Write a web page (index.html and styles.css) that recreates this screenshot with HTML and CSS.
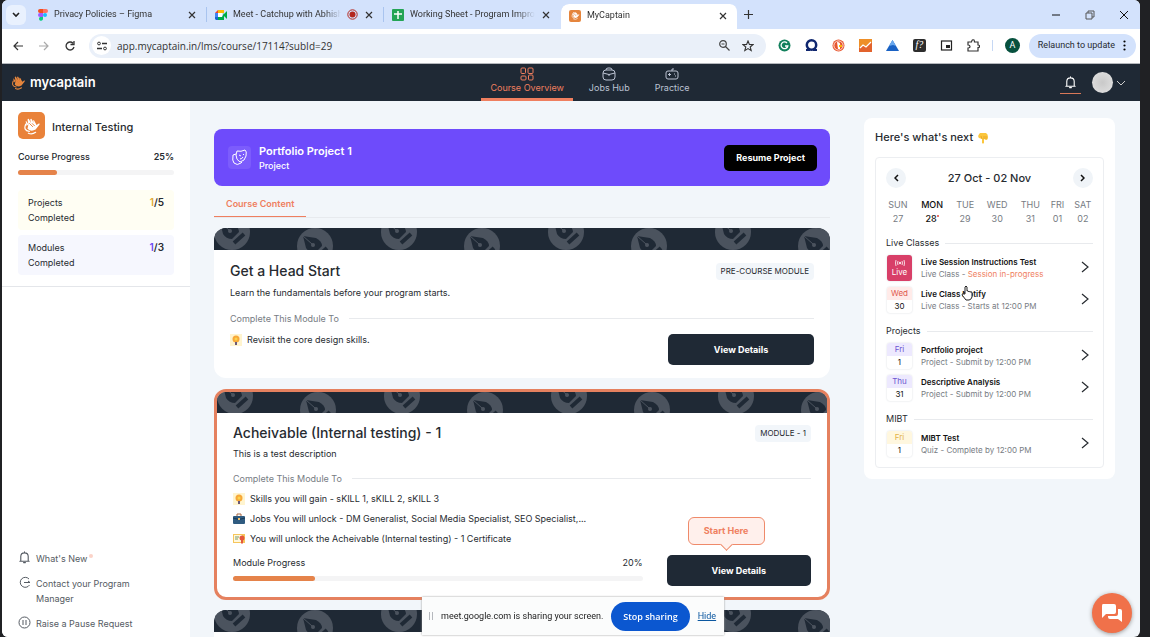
FILE: index.html
```html
<!DOCTYPE html>
<html lang="en">
<head>
    <meta charset="UTF-8">
    <meta name="viewport" content="width=device-width, initial-scale=1.0">
    <title>MyCaptain</title>
    <link rel="stylesheet" href="styles.css">
</head>
<body>
    <svg class="defs" width="0" height="0" aria-hidden="true">
        <defs>
            <g id="pen">
                <circle r="18" fill="#4b535e"/>
                <path d="M-12-10 L1-8 Q7-5 7 0 L0 7 Q-6 7 -9 2 Z" fill="#1f2935"/>
                <path d="M-12-10 L-3-2" stroke="#4b535e" stroke-width="1"/>
                <circle cx="-2" cy="-1" r="2" fill="#4b535e"/>
                <path d="M2 11 L12 2" stroke="#1f2935" stroke-width="4"/>
            </g>
            <pattern id="pens" width="167" height="40" patternUnits="userSpaceOnUse">
                <use href="#pen" x="18" y="4"/>
                <use href="#pen" x="101" y="18"/>
            </pattern>
            <symbol id="hand" viewBox="0 0 20 20">
                <path d="M4 10 L3 5 Q3 4 4 5 L6 8 M6 8 L5 3 Q6 1 7 3 L9 7 L8 3 Q9 1 10 3 L12 7 L11 4 Q12 3 13 5 L15 9 L18 7 Q19 8 18 9 L14 14 Q9 17 5 13 Z" fill="currentColor"/>
                <path d="M3 8 Q0 15 7 16 M6 18 Q10 20 14 17" fill="none" stroke="currentColor" stroke-width="1.4" stroke-linecap="round"/>
                <path d="M7 7 L11 11 M10 7 L13 10" stroke="#e87a2c" stroke-width="1"/>
            </symbol>
            <symbol id="bell" viewBox="0 0 14 14">
                <path d="M2 11 H12 M3 11 V6 Q3 2 7 2 Q11 2 11 6 V11 M7 1 V2 M6 12.500 H8" fill="none" stroke="currentColor" stroke-width="1.2" stroke-linecap="round"/>
            </symbol>
            <symbol id="close" viewBox="0 0 10 10">
                <path d="M2 2 L8 8 M8 2 L2 8" stroke="currentColor" stroke-width="1.2"/>
            </symbol>
            <symbol id="chevron" viewBox="0 0 8 12">
                <path d="M1 1 L7 6 L1 11" fill="none" stroke="currentColor" stroke-width="1.2"/>
            </symbol>
            <symbol id="bulb" viewBox="0 0 12 12">
                <rect width="12" height="12" fill="#fff4cf"/>
                <circle cx="6" cy="5" r="3.500" fill="#f7a838"/>
                <circle cx="6" cy="5" r="1.500" fill="#fbd34d"/>
                <rect x="5" y="8" width="2" height="3" fill="#6a5878"/>
            </symbol>
        </defs>
    </svg>

    <div class="window">
        <div class="tabs">
            <button class="tab-search" aria-label="Search tabs">
                <svg width="8" height="6" viewBox="0 0 8 6"><path d="M1 1 L4 4 L7 1" fill="none" stroke="#222" stroke-width="1.6"/></svg>
            </button>
            <div class="tab">
                <svg width="10" height="12" viewBox="0 0 10 12"><path d="M2 0H5V4H2A2 2 0 0 1 2 0" fill="#f24e1e"/><path d="M5 0H8A2 2 0 0 1 8 4H5" fill="#ff7262"/><path d="M2 4H5V8H2A2 2 0 0 1 2 4" fill="#a259ff"/><circle cx="7" cy="6" r="2" fill="#1abcfe"/><path d="M2 8H5V10A2 2 0 1 1 2 8" fill="#0acf83"/></svg>
                <span class="tab-name">Privacy Policies – Figma</span>
                <button aria-label="Close tab"><svg width="10" height="10"><use href="#close"/></svg></button>
            </div>
            <div class="tab">
                <svg width="12" height="10" viewBox="0 0 12 10"><path d="M0 3L3 0V3Z" fill="#ea4335"/><path d="M3 0H9V3H3Z" fill="#fbbc04"/><path d="M0 3H3V7H0Z" fill="#4285f4"/><path d="M0 7H3V10H1L0 9Z" fill="#1967d2"/><path d="M3 7H7L9 3V10H3Z M8 5L12 1V9Z" fill="#00ac47"/><path d="M3 3H7V7H3Z" fill="#fff"/></svg>
                <span class="tab-name">Meet - Catchup with Abhish</span>
                <svg width="11" height="11" viewBox="0 0 11 11"><circle cx="5.500" cy="5.500" r="4.700" fill="none" stroke="#b3261e"/><circle cx="5.500" cy="5.500" r="3" fill="#b3261e"/></svg>
                <button aria-label="Close tab"><svg width="10" height="10"><use href="#close"/></svg></button>
            </div>
            <div class="tab">
                <svg width="12" height="12" viewBox="0 0 12 12"><rect width="12" height="12" rx="1" fill="#23a455"/><path d="M6 2V10M2 5H10" stroke="#fff" stroke-width="1.5"/></svg>
                <span class="tab-name">Working Sheet - Program Impro</span>
                <button aria-label="Close tab"><svg width="10" height="10"><use href="#close"/></svg></button>
            </div>
            <div class="tab active">
                <span class="favicon"><svg width="9" height="9"><use href="#hand"/></svg></span>
                <span class="tab-name">MyCaptain</span>
                <button aria-label="Close tab"><svg width="10" height="10"><use href="#close"/></svg></button>
            </div>
            <button class="new-tab" aria-label="New tab"><svg width="9" height="9" viewBox="0 0 9 9"><path d="M4.500 0V9M0 4.500H9" stroke="#333" stroke-width="1.2"/></svg></button>
            <div class="window-buttons">
                <button aria-label="Minimize"><svg width="10" height="10" viewBox="0 0 10 10"><path d="M1 5H9" stroke="#111"/></svg></button>
                <button aria-label="Restore"><svg width="10" height="10" viewBox="0 0 10 10"><path d="M1 3H7V9H1Z M3 3V1H9V7H7" fill="none" stroke="#555"/></svg></button>
                <button aria-label="Close"><svg width="10" height="10" viewBox="0 0 10 10"><path d="M1 1L9 9M9 1L1 9" stroke="#111"/></svg></button>
            </div>
        </div>

        <div class="toolbar">
            <button aria-label="Back"><svg width="10" height="10" viewBox="0 0 10 10"><path d="M10 5H1M5 1L1 5L5 9" fill="none" stroke="#333" stroke-width="1.2"/></svg></button>
            <button aria-label="Forward"><svg width="10" height="10" viewBox="0 0 10 10"><path d="M0 5H9M5 1L9 5L5 9" fill="none" stroke="#aaa" stroke-width="1.2"/></svg></button>
            <button aria-label="Reload"><svg width="10" height="10" viewBox="0 0 10 10"><path d="M9 6A4 4 0 1 1 8 2.200M9 0V3.500H5.500" fill="none" stroke="#333" stroke-width="1.3"/></svg></button>
            <div class="address">
                <span class="site-info"><svg width="10" height="10" viewBox="0 0 10 10"><path d="M5 2.500H10M0 7.500H5" stroke="#333" stroke-width="1.3"/><circle cx="2" cy="2.500" r="1.400" fill="none" stroke="#333"/><circle cx="8" cy="7.500" r="1.400" fill="none" stroke="#333"/></svg></span>
                <input type="text" aria-label="Address" value="app.mycaptain.in/lms/course/17114?subId=29">
                <svg width="11" height="11" viewBox="0 0 11 11"><circle cx="4" cy="4" r="3.300" fill="none" stroke="#444" stroke-width="1.2"/><path d="M6.500 6.500L10.500 10.500M2.500 4H5.500" stroke="#444" stroke-width="1.2"/></svg>
                <svg width="12" height="12" viewBox="0 0 12 12"><path d="M6 1L7.400 4.400L11 4.600L8.200 7L9.200 10.600L6 8.600L2.800 10.600L3.800 7L1 4.600L4.600 4.400Z" fill="none" stroke="#333" stroke-width="1.1"/></svg>
            </div>
            <div class="extensions">
                <svg width="13" height="13" viewBox="0 0 13 13"><circle cx="6.500" cy="6.500" r="6" fill="#12805c"/><path d="M9 4A3.400 3.400 0 1 0 9.800 7H7" fill="none" stroke="#fff" stroke-width="1.300"/></svg>
                <svg width="13" height="13" viewBox="0 0 13 13"><circle cx="6.500" cy="6" r="4.700" fill="none" stroke="#10276f" stroke-width="2.500"/><path d="M1 11H5M12 11H8" stroke="#10276f" stroke-width="2"/></svg>
                <svg width="13" height="13" viewBox="0 0 13 13"><circle cx="6.500" cy="6.500" r="6" fill="#e8562f"/><circle cx="6.500" cy="6.500" r="4.600" fill="none" stroke="#fff" stroke-width=".8"/><path d="M5 3Q9 3 8 7V10H6Z" fill="#fff"/><path d="M7 6H10V8H7Z" fill="#fbbc04"/></svg>
                <svg width="13" height="13" viewBox="0 0 13 13"><rect width="13" height="13" fill="#ee8f28"/><path d="M0 9L4 6L7 8L13 3V13H0Z" fill="#e2632d"/><path d="M1 9L4 6L7 8L12 3" fill="none" stroke="#fff" stroke-width="1.200"/></svg>
                <svg width="13" height="13" viewBox="0 0 13 13"><path d="M6.500 1L13 12H0Z" fill="#1a62c4"/><path d="M6.500 1L10 7L7 6L3 7Z" fill="#69a8ee"/></svg>
                <span class="fx">f?</span>
                <svg width="13" height="13" viewBox="0 0 13 13"><rect x="1.500" y="2" width="10" height="9" fill="none" stroke="#222" stroke-width="1.200"/><rect x="6" y="6" width="4" height="3" fill="#222"/></svg>
                <svg width="13" height="13" viewBox="0 0 13 13"><path d="M1 3H4.500Q5 0 7 1Q7.500 2 7.500 3H11V6Q13 6 12.500 8Q12 8.500 11 8.500V12H1V9Q3 9 3 7.500Q3 6 1 6Z" fill="none" stroke="#333" stroke-width="1.200"/></svg>
            </div>
            <span class="divider"></span>
            <span class="profile">A</span>
            <button class="relaunch">Relaunch to update
                <svg width="3" height="11" viewBox="0 0 3 11"><circle cx="1.500" cy="1.500" r="1.100"/><circle cx="1.500" cy="5.500" r="1.100"/><circle cx="1.500" cy="9.500" r="1.100"/></svg>
            </button>
        </div>

        <header>
            <a class="brand" href="#"><svg width="15" height="15"><use href="#hand"/></svg><span>mycaptain</span></a>
            <nav>
                <a class="current" href="#">
                    <svg width="14" height="14" viewBox="0 0 14 14" fill="none" stroke="currentColor"><rect x="1" y="1" width="4.500" height="5.500" rx="1"/><rect x="8" y="1" width="5" height="5.500" rx="1"/><rect x="1" y="9" width="5" height="4" rx="1"/><rect x="8.500" y="8" width="4.500" height="5" rx="1"/></svg>
                    Course Overview
                </a>
                <a href="#">
                    <svg width="14" height="14" viewBox="0 0 14 14" fill="none" stroke="currentColor"><rect x="1" y="3" width="12" height="10" rx="3"/><path d="M4 3Q4 1 6 1H8Q10 1 10 3M1 6Q7 9 13 6M6 8H8"/></svg>
                    Jobs Hub
                </a>
                <a href="#">
                    <svg width="14" height="14" viewBox="0 0 14 14" fill="none" stroke="currentColor"><rect x="1" y="4" width="12" height="8" rx="2"/><path d="M7 4V2H9M3 7.500H6M4.500 6V9M9 7H10M10 9H11"/></svg>
                    Practice
                </a>
            </nav>
            <div class="account">
                <button class="notify" aria-label="Notifications"><svg width="13" height="13"><use href="#bell"/></svg></button>
                <button class="user" aria-label="Account"><span class="avatar"></span>
                    <svg width="10" height="6" viewBox="0 0 10 6"><path d="M1 1L5 5L9 1" fill="none" stroke="#ccc"/></svg>
                </button>
            </div>
        </header>

        <div class="page">
            <aside class="sidebar">
                <div class="course">
                    <div class="course-name"><span class="course-logo"><svg width="18" height="18"><use href="#hand"/></svg></span><h1>Internal Testing</h1></div>
                    <div class="label-row"><span>Course Progress</span><b>25%</b></div>
                    <div class="bar"><div style="width: 25%"></div></div>
                    <div class="count yellow"><span>Projects Completed</span><b><i>1</i>/5</b></div>
                    <div class="count violet"><span>Modules Completed</span><b><i>1</i>/3</b></div>
                </div>
                <div class="links">
                    <a href="#"><svg width="13" height="13"><use href="#bell"/></svg><span>What's New<sup></sup></span></a>
                    <a href="#"><svg width="13" height="13" viewBox="0 0 13 13"><path d="M11 3A5 5 0 1 0 11.500 9M6 6.500H12M10 5L12 6.500" fill="none" stroke="currentColor"/></svg><span>Contact your Program Manager</span></a>
                    <a href="#"><svg width="13" height="13" viewBox="0 0 13 13"><circle cx="6.500" cy="6.500" r="5.500" fill="none" stroke="currentColor"/><path d="M5 4V9M8 4V9" stroke="currentColor"/></svg><span>Raise a Pause Request</span></a>
                </div>
            </aside>

            <main>
                <section class="content">
                    <div class="resume">
                        <span class="resume-icon"><svg width="17" height="17" viewBox="0 0 17 17" fill="none" stroke="#fff"><path d="M6 2Q10 3 14 1Q16 2 15 7Q14 12 9 13Q5 11 5 6Z"/><path d="M5 5L2 6Q1 12 3 14Q6 17 10 14L11 13M8 6L10 7M12 6L13 5M9 10Q11 10 12 8"/></svg></span>
                        <div>
                            <h2>Portfolio Project 1</h2>
                            <p>Project</p>
                        </div>
                        <button>Resume Project</button>
                    </div>
                    <div class="content-tabs"><a href="#">Course Content</a></div>

                    <article class="card">
                        <svg class="band" width="100%" height="22"><rect width="100%" height="22" fill="url(#pens)"/></svg>
                        <div class="card-body">
                            <div class="card-title"><h3>Get a Head Start</h3><span class="badge">PRE-COURSE MODULE</span></div>
                            <p>Learn the fundamentals before your program starts.</p>
                            <div class="rule">Complete This Module To</div>
                            <div class="card-row">
                                <ul>
                                    <li><svg width="12" height="12"><use href="#bulb"/></svg>Revisit the core design skills.</li>
                                </ul>
                                <div class="action"><button class="details">View Details</button></div>
                            </div>
                        </div>
                    </article>

                    <article class="card started">
                        <svg class="band" width="100%" height="21"><rect width="100%" height="21" fill="url(#pens)"/></svg>
                        <div class="card-body">
                            <div class="card-title"><h3>Acheivable (Internal testing) - 1</h3><span class="badge">MODULE - 1</span></div>
                            <p>This is a test description</p>
                            <div class="rule">Complete This Module To</div>
                            <div class="card-row">
                                <div class="left">
                                    <ul>
                                        <li><svg width="12" height="12"><use href="#bulb"/></svg>Skills you will gain - sKILL 1, sKILL 2, sKILL 3</li>
                                        <li><svg width="12" height="12" viewBox="0 0 12 12"><path d="M4 3V1H8V3" fill="none" stroke="#a96640"/><rect y="3" width="12" height="8" rx="1" fill="#2f5b80"/><path d="M0 5Q6 8 12 5" fill="none" stroke="#183954"/><rect x="5" y="5" width="2" height="2" fill="#f2c36b"/></svg>Jobs You will unlock - DM Generalist, Social Media Specialist, SEO Specialist,...</li>
                                        <li><svg width="12" height="12" viewBox="0 0 12 12"><rect x="0" y="1" width="12" height="9" fill="#f6c65b"/><rect x="1" y="2" width="8" height="7" fill="#fff7dc"/><path d="M2 4H6M2 6H5" stroke="#7a9a6a"/><circle cx="9" cy="5" r="2.500" fill="#e4573d"/><path d="M8 7V11L9 10L10 11V7" fill="#e4573d"/></svg>You will unlock the Acheivable (Internal testing) - 1 Certificate</li>
                                    </ul>
                                    <div class="label-row"><span>Module Progress</span><span>20%</span></div>
                                    <div class="bar"><div style="width: 20%"></div></div>
                                </div>
                                <div class="action"><button class="details">View Details</button><span class="start">Start Here</span></div>
                            </div>
                        </div>
                    </article>

                    <article class="card">
                        <svg class="band" width="100%" height="22"><rect width="100%" height="22" fill="url(#pens)"/></svg>
                        <div class="card-body"></div>
                    </article>
                </section>

                <aside class="next">
                    <h2>Here's what's next
                        <svg width="12" height="12" viewBox="0 0 12 12"><path d="M3 1H9Q11 2 11 5Q11 8 9 8L7 7V11Q6 12 5 11V7L2 6Q0 4 3 1Z" fill="#fbc63d"/><path d="M7 4V7M9 4V7M4 4L5 7" stroke="#e39b22" stroke-width=".7"/></svg>
                    </h2>
                    <div class="calendar">
                        <div class="week">
                            <button aria-label="Previous week"><svg width="5" height="8" viewBox="0 0 5 8"><path d="M4 1L1 4L4 7" fill="none" stroke="#111" stroke-width="1.500"/></svg></button>
                            <span>27 Oct - 02 Nov</span>
                            <button aria-label="Next week"><svg width="5" height="8" viewBox="0 0 5 8"><path d="M1 1L4 4L1 7" fill="none" stroke="#111" stroke-width="1.500"/></svg></button>
                        </div>
                        <table>
                            <tr><th>SUN</th><th class="today">MON</th><th>TUE</th><th>WED</th><th>THU</th><th>FRI</th><th>SAT</th></tr>
                            <tr><td>27</td><td class="today">28<i></i></td><td>29</td><td>30</td><td>31</td><td>01</td><td>02</td></tr>
                        </table>
                        <div class="group">
                            <div class="rule">Live Classes</div>
                            <a class="event" href="#">
                                <span class="date live"><svg width="10" height="8" viewBox="0 0 10 8" fill="none" stroke="#fff" stroke-width=".8"><circle cx="5" cy="4" r=".8" fill="#fff"/><path d="M3 2Q2 4 3 6M7 2Q8 4 7 6M1 1Q0 4 1 7M9 1Q10 4 9 7"/></svg>Live</span>
                                <span class="event-text"><b>Live Session Instructions Test</b><small>Live Class - <em>Session in-progress</em></small></span>
                                <svg width="8" height="12"><use href="#chevron"/></svg>
                            </a>
                            <a class="event" href="#">
                                <span class="date red"><i>Wed</i>30</span>
                                <span class="event-text"><b>Live Class Notify</b><small>Live Class - Starts at 12:00 PM</small></span>
                                <svg width="8" height="12"><use href="#chevron"/></svg>
                            </a>
                        </div>
                        <div class="group">
                            <div class="rule">Projects</div>
                            <a class="event" href="#">
                                <span class="date purple"><i>Fri</i>1</span>
                                <span class="event-text"><b>Portfolio project</b><small>Project - Submit by 12:00 PM</small></span>
                                <svg width="8" height="12"><use href="#chevron"/></svg>
                            </a>
                            <a class="event" href="#">
                                <span class="date purple"><i>Thu</i>31</span>
                                <span class="event-text"><b>Descriptive Analysis</b><small>Project - Submit by 12:00 PM</small></span>
                                <svg width="8" height="12"><use href="#chevron"/></svg>
                            </a>
                        </div>
                        <div class="group">
                            <div class="rule">MIBT</div>
                            <a class="event" href="#">
                                <span class="date gold"><i>Fri</i>1</span>
                                <span class="event-text"><b>MIBT Test</b><small>Quiz - Complete by 12:00 PM</small></span>
                                <svg width="8" height="12"><use href="#chevron"/></svg>
                            </a>
                        </div>
                    </div>
                </aside>
            </main>
        </div>
    </div>

    <div class="sharing">
        <span class="grip"></span>
        <span>meet.google.com is sharing your screen.</span>
        <button>Stop sharing</button>
        <a href="#">Hide</a>
    </div>
    <button class="chat" aria-label="Chat">
        <svg width="22" height="20" viewBox="0 0 22 20"><path d="M2 1H13Q15 1 15 3V9Q15 11 13 11H5L1 15V3Q1 1 2 1Z" fill="#fff"/><path d="M17 6H19Q21 6 21 8V19L17 16H9Q7 16 7 14V13H15Q17 13 17 11Z" fill="#fff"/></svg>
    </button>
    <svg class="pointer" width="12" height="16" viewBox="0 0 12 16"><path d="M4 9V2Q5 0 6 2V6Q7 5 8 7Q9 6 9 7Q11 6 11 8V12Q10 15 8 15H5L1 10Q1 8 3 9Z" fill="#fff" stroke="#222"/></svg>
</body>
</html>
```
FILE: styles.css
```css
* {
    margin: 0;
    padding: 0;
    box-sizing: border-box;
}
body {
    height: 100vh;
    padding: 0 10px 0 2px;
    background: #202124;
    color: #272b30;
    font-family: 'Inter', 'Liberation Sans', sans-serif;
    font-size: 9px;
    line-height: 15px;
    overflow: hidden;
}
button {
    border: none;
    background: none;
    font: inherit;
    color: inherit;
    cursor: pointer;
}
a {
    color: inherit;
    text-decoration: none;
}
svg {
    display: block;
    flex: none;
}
ul {
    list-style: none;
}
.defs {
    position: absolute;
}
.window {
    display: flex;
    flex-direction: column;
    height: 100vh;
    border-radius: 6px;
    overflow: hidden;
    background: #f2f6fa;
}

/* browser */
.tabs {
    display: flex;
    align-items: center;
    height: 29px;
    flex: none;
    padding-left: 4px;
    background: #d3e2fc;
    font-family: Roboto, 'Noto Sans', sans-serif;
    color: #333;
}
.tab-search {
    display: flex;
    align-items: center;
    justify-content: center;
    width: 20px;
    height: 20px;
    margin-right: 4px;
    border-radius: 6px;
    background: #e9f1fe;
}
.tab {
    display: flex;
    align-items: center;
    gap: 6px;
    flex: 0 1 177px;
    min-width: 0;
    height: 15px;
    padding: 0 9px 0 8px;
    border-right: 1px solid #a9c4ef;
}
.tab:nth-child(4) {
    border-right-color: transparent;
}
.tab-name {
    flex: 1;
    overflow: hidden;
    white-space: nowrap;
    mask-image: linear-gradient(to right, #000 85%, transparent);
}
.tab.active {
    height: 25px;
    margin-top: 4px;
    padding-bottom: 2px;
    border-color: transparent;
    border-radius: 8px 8px 0 0;
    background: #fff;
    background-clip: padding-box;
}
.favicon {
    display: flex;
    align-items: center;
    justify-content: center;
    width: 12px;
    height: 12px;
    border-radius: 2px;
    background: #e5853d;
    color: #fff;
}
.new-tab {
    margin-left: 6px;
}
.window-buttons {
    display: flex;
    gap: 24px;
    margin-left: auto;
    padding-right: 11px;
}
.toolbar {
    display: flex;
    align-items: center;
    gap: 16px;
    height: 35px;
    flex: none;
    padding: 0 4px 1px 11px;
    border-bottom: 1px solid #b5b8bd;
    background: #fff;
    font-family: Roboto, 'Noto Sans', sans-serif;
}
.address {
    display: flex;
    align-items: center;
    gap: 12px;
    flex: 1;
    height: 24px;
    margin-left: -2px;
    padding: 0 12px 0 3px;
    border-radius: 12px;
    background: #eaf0f9;
}
.site-info {
    display: flex;
    align-items: center;
    justify-content: center;
    width: 19px;
    height: 19px;
    border-radius: 50%;
    background: #fff;
}
.address input {
    flex: 1;
    min-width: 0;
    margin-left: -6px;
    border: none;
    outline: none;
    background: none;
    font-family: 'Open Sans', 'Noto Sans', sans-serif;
    font-size: 10px;
    color: #333;
}
.extensions {
    display: flex;
    align-items: center;
    gap: 14px;
    margin-left: -4px;
}
.fx {
    width: 13px;
    height: 13px;
    border-radius: 2px;
    background: #2d2d2d;
    color: #fff;
    font: italic 10px/12px 'Liberation Serif', serif;
    text-align: center;
}
.divider {
    width: 1px;
    height: 11px;
    margin: 0 -4px;
    background: #c6d8f4;
}
.profile {
    width: 15px;
    height: 15px;
    margin-right: -7px;
    border-radius: 50%;
    background: #07513e;
    color: #fff;
    text-align: center;
}
.relaunch {
    display: flex;
    align-items: center;
    gap: 8px;
    height: 24px;
    padding: 0 10px 0 9px;
    border-radius: 12px;
    background: #d3e2fc;
    white-space: nowrap;
}

/* header */
header {
    display: grid;
    grid-template-columns: 1fr auto 1fr;
    height: 37px;
    flex: none;
    padding: 0 14px 0 9px;
    background: #1f2935;
    color: #fff;
}
.brand {
    display: flex;
    align-items: center;
    gap: 4px;
    font-size: 13px;
    font-weight: 600;
}
.brand svg {
    color: #e5853d;
}
nav {
    display: flex;
    gap: 7px;
    padding-left: 43px;
    color: #bcc3d3;
}
nav a {
    display: flex;
    flex-direction: column;
    align-items: center;
    padding: 3px 9px 0;
    border-bottom: 3px solid transparent;
    line-height: 13px;
}
nav .current {
    border-color: #ef7f5f;
    color: #ef7f5f;
}
.account {
    display: flex;
    align-items: center;
    justify-content: flex-end;
    gap: 11px;
}
.notify {
    padding: 5px 4px 4px;
    border-bottom: 1px solid #d87858;
}
.user {
    display: flex;
    align-items: center;
    gap: 3px;
}
.avatar {
    width: 21px;
    height: 21px;
    border-radius: 50%;
    background: radial-gradient(circle, #c9c9c9, #e3e3e3);
}

/* sidebar */
.page {
    display: flex;
    flex: 1;
    min-height: 0;
}
.sidebar {
    display: flex;
    flex-direction: column;
    justify-content: space-between;
    flex: 0 0 188px;
    background: #fff;
}
.course {
    padding: 11px 16px;
    border-bottom: 1px solid #e4e6ea;
}
.course-name {
    display: flex;
    align-items: center;
    gap: 7px;
    margin-bottom: 10px;
}
h1 {
    padding-top: 3px;
    font-size: 11px;
    font-weight: 500;
}
.course-logo {
    display: flex;
    align-items: center;
    justify-content: center;
    width: 27px;
    height: 27px;
    border-radius: 5px;
    background: #e9823a;
    color: #fff;
}
.label-row {
    display: flex;
    justify-content: space-between;
    font-weight: 500;
}
.label-row b {
    font-weight: 600;
}
.bar {
    height: 5px;
    margin-top: 6px;
    border-radius: 3px;
    background: #f4f4f5;
}
.bar div {
    height: 5px;
    border-radius: 3px;
    background: #e5834a;
}
.course .bar {
    margin-bottom: 15px;
}
.count {
    display: flex;
    justify-content: space-between;
    margin-top: 5px;
    padding: 5px 10px;
    border-radius: 4px;
}
.count span {
    width: 60px;
}
.count b {
    font-size: 10px;
    font-weight: 600;
}
.count i {
    font-style: normal;
}
.yellow {
    background: #fffef3;
}
.yellow i {
    color: #dfaa35;
}
.violet {
    background: #f6f7fe;
}
.violet i {
    color: #6b48f2;
}
.links {
    padding: 0 16px 6px;
    color: #555b63;
}
.links a {
    display: flex;
    gap: 5px;
    margin-top: 10px;
}
.links span {
    max-width: 110px;
}
.links sup {
    display: inline-block;
    width: 4px;
    height: 4px;
    margin-left: 2px;
    border-radius: 50%;
    background: #fbd3c8;
}

/* course */
main {
    display: flex;
    align-items: flex-start;
    gap: 34px;
    flex: 1;
    min-width: 0;
    padding: 0 25px 0 24px;
}
.content {
    flex: 1;
    min-width: 0;
    padding-top: 28px;
}
.resume {
    display: flex;
    align-items: center;
    gap: 8px;
    height: 57px;
    padding: 0 13px 0 14px;
    border-radius: 8px;
    background: #6e4bfb;
    color: #fff;
}
.resume-icon {
    display: flex;
    align-items: center;
    justify-content: center;
    width: 23px;
    height: 23px;
    border-radius: 4px;
    background: #7c5cfc;
}
.resume h2 {
    padding-top: 1px;
    font-size: 11px;
    font-weight: 600;
}
.resume p {
    font-weight: 500;
    line-height: 14px;
}
.resume button {
    height: 26px;
    margin-left: auto;
    padding: 0 12px;
    border-radius: 5px;
    background: #000;
    font-weight: 700;
}
.content-tabs {
    display: flex;
    margin: 10px 0;
    border-bottom: 1px solid #e7eaee;
}
.content-tabs a {
    padding: 0 12px 5px;
    border-bottom: 1px solid #ef7f5f;
    color: #ef7f5f;
    font-weight: 600;
}
.card {
    margin-bottom: 11px;
    border-radius: 12px;
    background: #fff;
    overflow: hidden;
}
.card.started {
    border: 3px solid #e5815f;
    margin-bottom: 10px;
}
.band {
    background: #1f2935;
}
.card-body {
    min-height: 50px;
    padding: 12px 16px 13px;
}
.card-title {
    display: flex;
    align-items: center;
    justify-content: space-between;
    margin-bottom: 5px;
}
h3 {
    font-size: 14px;
    font-weight: 500;
    line-height: 18px;
}
.badge {
    padding: 1px 5px;
    border-radius: 4px;
    background: #f2f6fa;
    font-size: 8px;
}
.rule {
    display: flex;
    align-items: center;
    gap: 10px;
}
.rule::after {
    content: '';
    flex: 1;
    height: 1px;
    background: #e8eaed;
}
.card .rule {
    margin: 11px 0 6px;
    color: #777c83;
}
.card-row {
    display: flex;
    justify-content: space-between;
    gap: 24px;
    min-height: 33px;
}
.left {
    flex: 1;
    min-width: 0;
    padding-bottom: 5px;
}
.card li {
    display: flex;
    align-items: center;
    gap: 5px;
    margin-bottom: 5px;
}
.card .label-row {
    margin-top: 9px;
    font-weight: 400;
}
.started .card-body {
    padding: 11px 16px;
}
.started .card-title {
    margin-bottom: 4px;
}
.card.started .rule {
    margin-top: 10px;
    margin-bottom: 5px;
}
.action {
    display: flex;
    align-items: flex-end;
    position: relative;
    flex: 0 0 25%;
}
.details {
    width: 100%;
    height: 31px;
    border-radius: 5px;
    background: #1f2935;
    color: #fff;
    font-weight: 700;
}
.start {
    position: absolute;
    bottom: 41px;
    left: 21px;
    width: 77px;
    border: 1px solid #ef8a6a;
    border-radius: 6px;
    background: #fff0ec;
    color: #ef7f5f;
    font-weight: 700;
    line-height: 26px;
    text-align: center;
}
.start::after {
    content: '';
    position: absolute;
    left: 33px;
    bottom: -5px;
    width: 8px;
    height: 8px;
    border: solid #ef8a6a;
    border-width: 0 1px 1px 0;
    background: #fff0ec;
    transform: rotate(45deg);
}

/* calendar */
.next {
    flex: 0 0 251px;
    margin-top: 17px;
    padding: 11px;
    border-radius: 8px;
    background: #fff;
}
.next h2 {
    display: flex;
    align-items: center;
    gap: 4px;
    margin: 1px 0 12px;
    font-size: 11px;
    font-weight: 500;
}
.calendar {
    padding: 10px;
    border: 1px solid #eceef1;
    border-radius: 4px;
}
.week {
    display: flex;
    align-items: center;
    justify-content: space-between;
    font-size: 11px;
    font-weight: 500;
}
.week button {
    display: flex;
    align-items: center;
    justify-content: center;
    width: 20px;
    height: 20px;
    border-radius: 50%;
    background: #f0f4f8;
}
table {
    width: calc(100% + 8px);
    margin: 10px -4px 11px;
    border-collapse: collapse;
    color: #777c83;
    line-height: 14px;
    text-align: center;
}
th {
    font-weight: 400;
}
.today {
    color: #111;
    font-weight: 500;
}
.today i {
    display: inline-block;
    width: 2px;
    height: 2px;
    border-radius: 50%;
    background: #e5483a;
    vertical-align: top;
    margin-top: 3px;
}
.group {
    display: flex;
    flex-direction: column;
    gap: 6px;
}
.group + .group {
    margin-top: 12px;
}
.group .rule {
    gap: 6px;
    line-height: 12px;
}
.event {
    display: flex;
    align-items: center;
    gap: 9px;
    height: 26px;
    padding: 0 4px 0 1px;
}
.event > svg {
    margin-bottom: 3px;
}
.event-text {
    flex: 1;
    line-height: 12px;
}
.event b {
    display: block;
    color: #111;
    font-size: 8px;
    font-weight: 600;
}
.event small {
    display: block;
    color: #777c83;
    font-size: 8px;
}
.event em {
    color: #ef7f5f;
    font-style: normal;
}
.date {
    width: 25px;
    height: 26px;
    border-radius: 3px;
    box-shadow: 0 0 2px #d5d8dd;
    color: #111;
    font-size: 8px;
    line-height: 13px;
    text-align: center;
    overflow: hidden;
}
.date i {
    display: block;
    font-style: normal;
}
.live {
    display: flex;
    flex-direction: column;
    align-items: center;
    justify-content: center;
    background: #d83f68;
    color: #fff;
    line-height: 10px;
}
.red i {
    background: #ffebe9;
    color: #e05a4e;
}
.purple i {
    background: #ede9fe;
    color: #6b55d0;
}
.gold i {
    background: #fff7df;
    color: #e2b24c;
}

/* floating */
.sharing {
    position: fixed;
    left: 422px;
    bottom: 2px;
    display: flex;
    align-items: center;
    height: 38px;
    padding: 0 8px 0 7px;
    background: #fbfcfc;
    box-shadow: 0 0 2px #999;
    font-family: Roboto, 'Noto Sans', sans-serif;
    color: #222;
    white-space: nowrap;
}
.grip {
    width: 4px;
    height: 8px;
    margin-right: 8px;
    border: solid #b5b8bd;
    border-width: 0 1px;
}
.sharing button {
    height: 29px;
    margin: 0 8px;
    padding: 0 12px;
    border-radius: 15px;
    background: #0b57d0;
    color: #fff;
    font-family: 'Open Sans', 'Noto Sans', sans-serif;
    font-weight: 600;
}
.sharing a {
    color: #0b57a0;
    text-decoration: underline;
}
.chat {
    position: fixed;
    right: 18px;
    bottom: 4px;
    display: flex;
    align-items: center;
    justify-content: center;
    width: 40px;
    height: 40px;
    border-radius: 50%;
    background: #f0714a;
    box-shadow: 0 1px 4px #999;
}
.pointer {
    position: fixed;
    left: 961px;
    top: 285px;
}
```
